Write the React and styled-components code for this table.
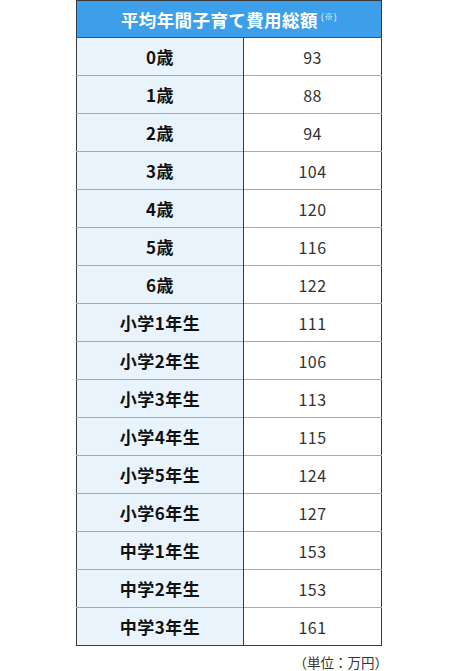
import React from "react";
import styled, { createGlobalStyle } from "styled-components";

const GlobalStyle = createGlobalStyle`
  body {
    margin: 0;
    background: #fff;
    font-family: "Noto Sans CJK JP", "Noto Sans", sans-serif;
  }
`;

const Wrap = styled.div`
  width: 305px;
  margin: 0 auto;
`;

const Table = styled.table`
  width: 100%;
  border-collapse: collapse;
  table-layout: fixed;
  border: 1px solid #3a3a3a;
`;

const Col = styled.col`
  width: ${(p) => p.$w}px;
`;

const HeadCell = styled.th`
  height: 36px;
  padding: 0;
  background: #3d9fe9;
  color: #fff;
  font-size: 17.5px;
  font-weight: 700;
  letter-spacing: 0.4px;
  border-bottom: 1px solid #1d5a8e;
  vertical-align: middle;
`;

const Note = styled.sup`
  font-size: 9px;
  font-weight: 400;
  vertical-align: 7px;
  margin-left: 3px;
`;

const Row = styled.tr`
  height: 38px;
  & + & td {
    border-top: 1px solid #a9a9a9;
  }
`;

const LabelCell = styled.td`
  padding: 0;
  background: #e8f3fb;
  color: #111;
  font-size: 17px;
  font-weight: 700;
  letter-spacing: 0.5px;
  text-align: center;
  border-right: 1px solid #3a3a3a;
`;

const ValueCell = styled.td`
  padding: 0;
  background: #fff;
  color: #333;
  font-size: 16px;
  letter-spacing: 0.4px;
  text-align: center;
`;

const Unit = styled.div`
  margin-top: 6px;
  text-align: right;
  font-size: 13.5px;
  color: #333;
  margin-right: -7px;
`;

const rows = [
  ["0歳", 93],
  ["1歳", 88],
  ["2歳", 94],
  ["3歳", 104],
  ["4歳", 120],
  ["5歳", 116],
  ["6歳", 122],
  ["小学1年生", 111],
  ["小学2年生", 106],
  ["小学3年生", 113],
  ["小学4年生", 115],
  ["小学5年生", 124],
  ["小学6年生", 127],
  ["中学1年生", 153],
  ["中学2年生", 153],
  ["中学3年生", 161],
];

export default function App() {
  return (
    <>
      <GlobalStyle />
      <Wrap>
        <Table>
          <colgroup>
            <Col $w={167} />
            <Col $w={138} />
          </colgroup>
          <thead>
            <tr>
              <HeadCell colSpan={2}>
                平均年間子育て費用総額<Note>(※)</Note>
              </HeadCell>
            </tr>
          </thead>
          <tbody>
            {rows.map(([label, value]) => (
              <Row key={label}>
                <LabelCell>{label}</LabelCell>
                <ValueCell>{value}</ValueCell>
              </Row>
            ))}
          </tbody>
        </Table>
        <Unit>（単位：万円）</Unit>
      </Wrap>
    </>
  );
}
